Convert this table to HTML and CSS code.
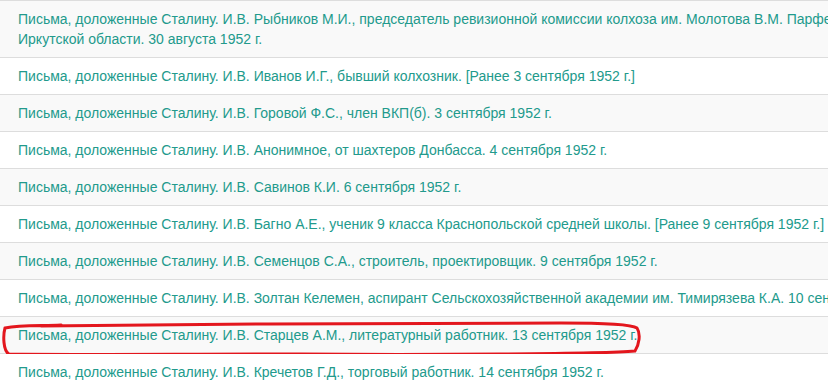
FILE: index.html
```html
<!DOCTYPE html>
<html lang="ru">
<head>
<meta charset="utf-8">
<title>Письма, доложенные Сталину</title>
<link rel="stylesheet" href="styles.css">
</head>
<body>
<div class="page">
  <ul class="list">
    <li class="item"><a href="#">Письма, доложенные Сталину. И.В. Рыбников М.И., председатель ревизионной комиссии колхоза им. Молотова В.М. Парфеновского сельсовета Тулунского района<br>Иркутской области. 30 августа 1952 г.</a></li>
    <li class="item"><a href="#">Письма, доложенные Сталину. И.В. Иванов И.Г., бывший колхозник. [Ранее 3 сентября 1952 г.]</a></li>
    <li class="item"><a href="#">Письма, доложенные Сталину. И.В. Горовой Ф.С., член ВКП(б). 3 сентября 1952 г.</a></li>
    <li class="item"><a href="#">Письма, доложенные Сталину. И.В. Анонимное, от шахтеров Донбасса. 4 сентября 1952 г.</a></li>
    <li class="item"><a href="#">Письма, доложенные Сталину. И.В. Савинов К.И. 6 сентября 1952 г.</a></li>
    <li class="item"><a href="#">Письма, доложенные Сталину. И.В. Багно А.Е., ученик 9 класса Краснопольской средней школы. [Ранее 9 сентября 1952 г.]</a></li>
    <li class="item"><a href="#">Письма, доложенные Сталину. И.В. Семенцов С.А., строитель, проектировщик. 9 сентября 1952 г.</a></li>
    <li class="item"><a href="#">Письма, доложенные Сталину. И.В. Золтан Келемен, аспирант Сельскохозяйственной академии им. Тимирязева К.А. 10 сентября 1952 г.</a></li>
    <li class="item marked"><a href="#">Письма, доложенные Сталину. И.В. Старцев А.М., литературный работник. 13 сентября 1952 г.</a>
      <svg class="mark" width="644" height="36" viewBox="0 0 644 36" aria-hidden="true">
        <path d="M40 5 C 200 3, 420 2, 560 2 C 600 2, 630 3, 636 7 C 640 13, 638 24, 634 30 C 600 33, 420 34, 300 33 C 180 33, 60 34, 8 33 C 2 30, 2 14, 4 7 C 20 4, 40 5, 60 4" fill="none" stroke="#e3161d" stroke-width="3" stroke-linecap="round"/>
      </svg>
    </li>
    <li class="item"><a href="#">Письма, доложенные Сталину. И.В. Кречетов Г.Д., торговый работник. 14 сентября 1952 г.</a></li>
  </ul>
</div>
</body>
</html>
```

FILE: styles.css
```css
html, body {
  margin: 0;
  padding: 0;
  background: #ffffff;
  overflow: hidden;
}
.page {
  width: 1400px;
}
.list {
  list-style: none;
  margin: 0;
  padding: 0;
  border-top: 1px solid #dddddd;
}
.item {
  position: relative;
  padding: 8px 15px 8px 18px;
  border-bottom: 1px solid #dddddd;
  font-family: "Liberation Sans", Arial, sans-serif;
  font-size: 14px;
  line-height: 20px;
  background: #ffffff;
}
.item:nth-child(odd) {
  background: #f9f9f9;
}
.item a {
  color: #229a8c;
  text-decoration: none;
}
.mark {
  position: absolute;
  left: 1px;
  top: 4px;
}
```
